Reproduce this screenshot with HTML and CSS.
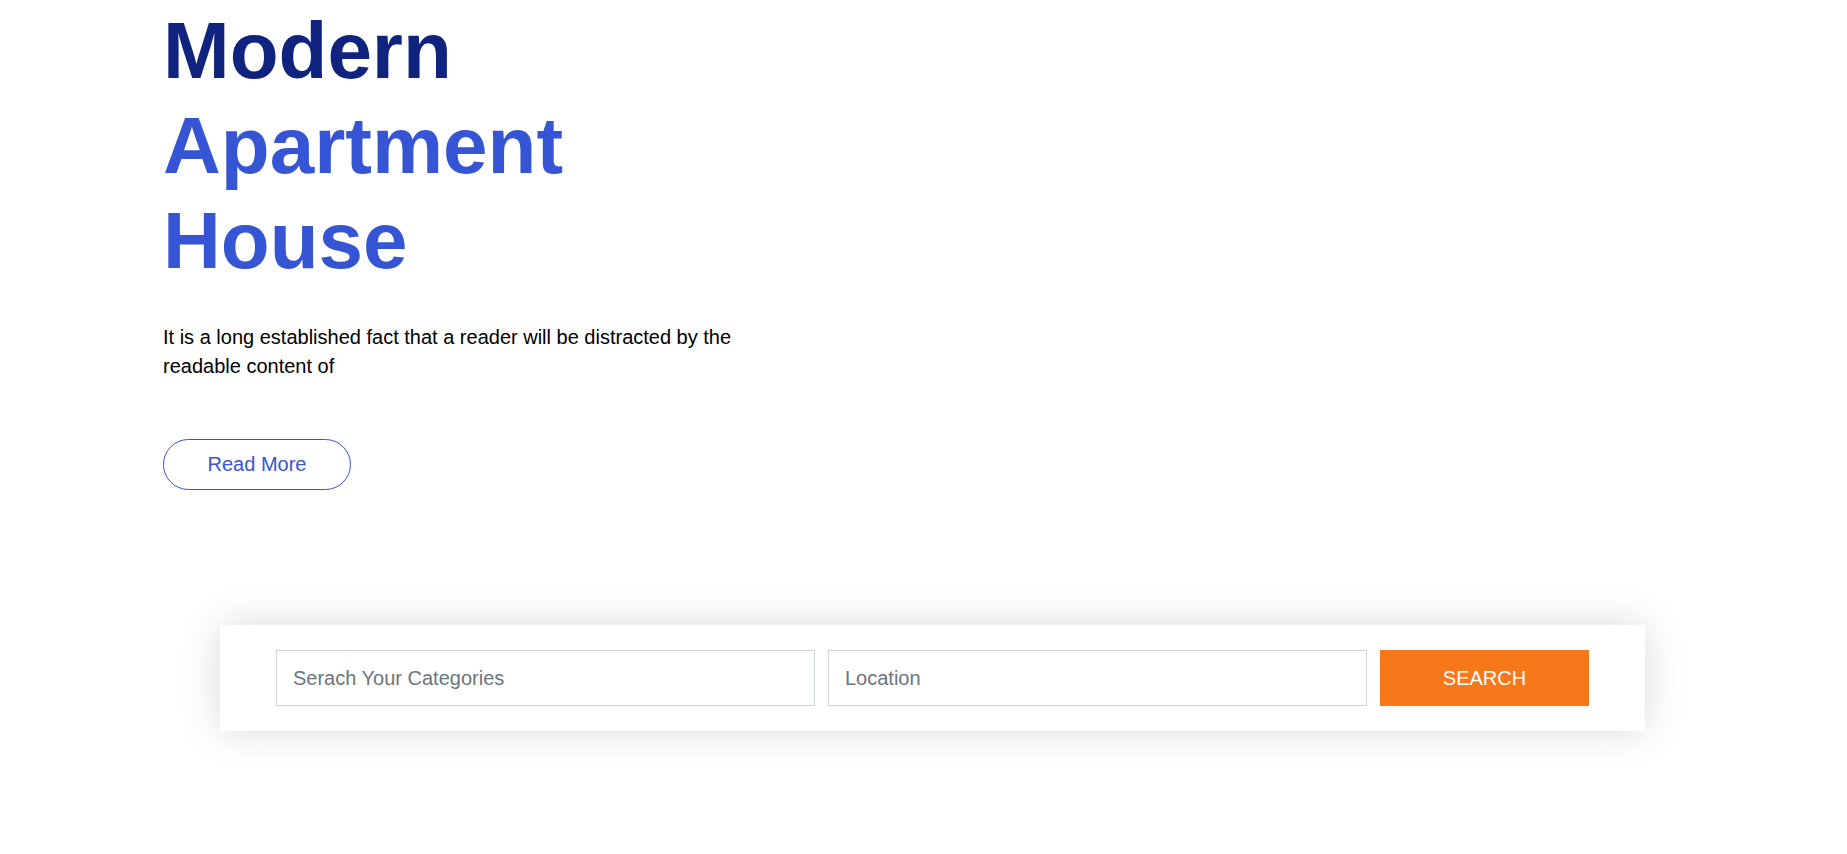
FILE: index.html
```html
<!DOCTYPE html>
<html lang="en">
<head>
<meta charset="utf-8">
<title>Modern Apartment House</title>
<link rel="stylesheet" href="styles.css">
</head>
<body>
<section class="hero">
  <h1 class="hero-title"><span class="title-dark">Modern</span><span class="title-blue">Apartment</span><span class="title-blue">House</span></h1>
  <p class="hero-text">It is a long established fact that a reader will be distracted by the readable content of</p>
  <a class="btn-outline" href="#">Read More</a>
</section>
<section class="search-section">
  <form class="search-box">
    <input class="search-input" type="text" placeholder="Serach Your Categories">
    <input class="search-input" type="text" placeholder="Location">
    <button class="search-btn" type="button">SEARCH</button>
  </form>
</section>
</body>
</html>
```
FILE: styles.css
```css
* { box-sizing: border-box; }
html, body { margin: 0; padding: 0; background: #fff; }
body {
  font-family: "Liberation Sans", Arial, Helvetica, sans-serif;
  color: #000;
}
.hero {
  padding: 3px 0 0 163px;
}
.hero-title {
  margin: 0;
  font-size: 80px;
  line-height: 95px;
  font-weight: 700;
}
.hero-title span { display: block; }
.title-dark { color: #10237f; }
.title-blue { color: #3555d4; }
.hero-text {
  margin: 35px 0 0;
  max-width: 600px;
  font-size: 20px;
  line-height: 29px;
  color: #000;
}
.btn-outline {
  margin-top: 58px;
  display: inline-flex;
  align-items: center;
  justify-content: center;
  width: 188px;
  height: 51px;
  border: 1px solid #3555d4;
  border-radius: 26px;
  color: #3555d4;
  font-size: 20px;
  text-decoration: none;
}
.search-section {
  padding: 135px 0 80px 220px;
}
.search-box {
  margin: 0;
  width: 1425px;
  padding: 25px 56px;
  background: #fff;
  display: flex;
  gap: 13px;
  box-shadow: 0 0 40px rgba(0, 0, 0, 0.15);
}
.search-input {
  flex: 1 1 0;
  min-width: 0;
  height: 56px;
  padding: 0 16px;
  border: 1px solid #ced4da;
  border-radius: 0;
  font-family: inherit;
  font-size: 20px;
  color: #495057;
  outline: none;
}
.search-input::placeholder { color: #6c757d; opacity: 1; }
.search-btn {
  flex: 0 0 209px;
  height: 56px;
  border: 0;
  background: #f77818;
  color: #fff;
  font-family: inherit;
  font-size: 20px;
  cursor: pointer;
}
```
